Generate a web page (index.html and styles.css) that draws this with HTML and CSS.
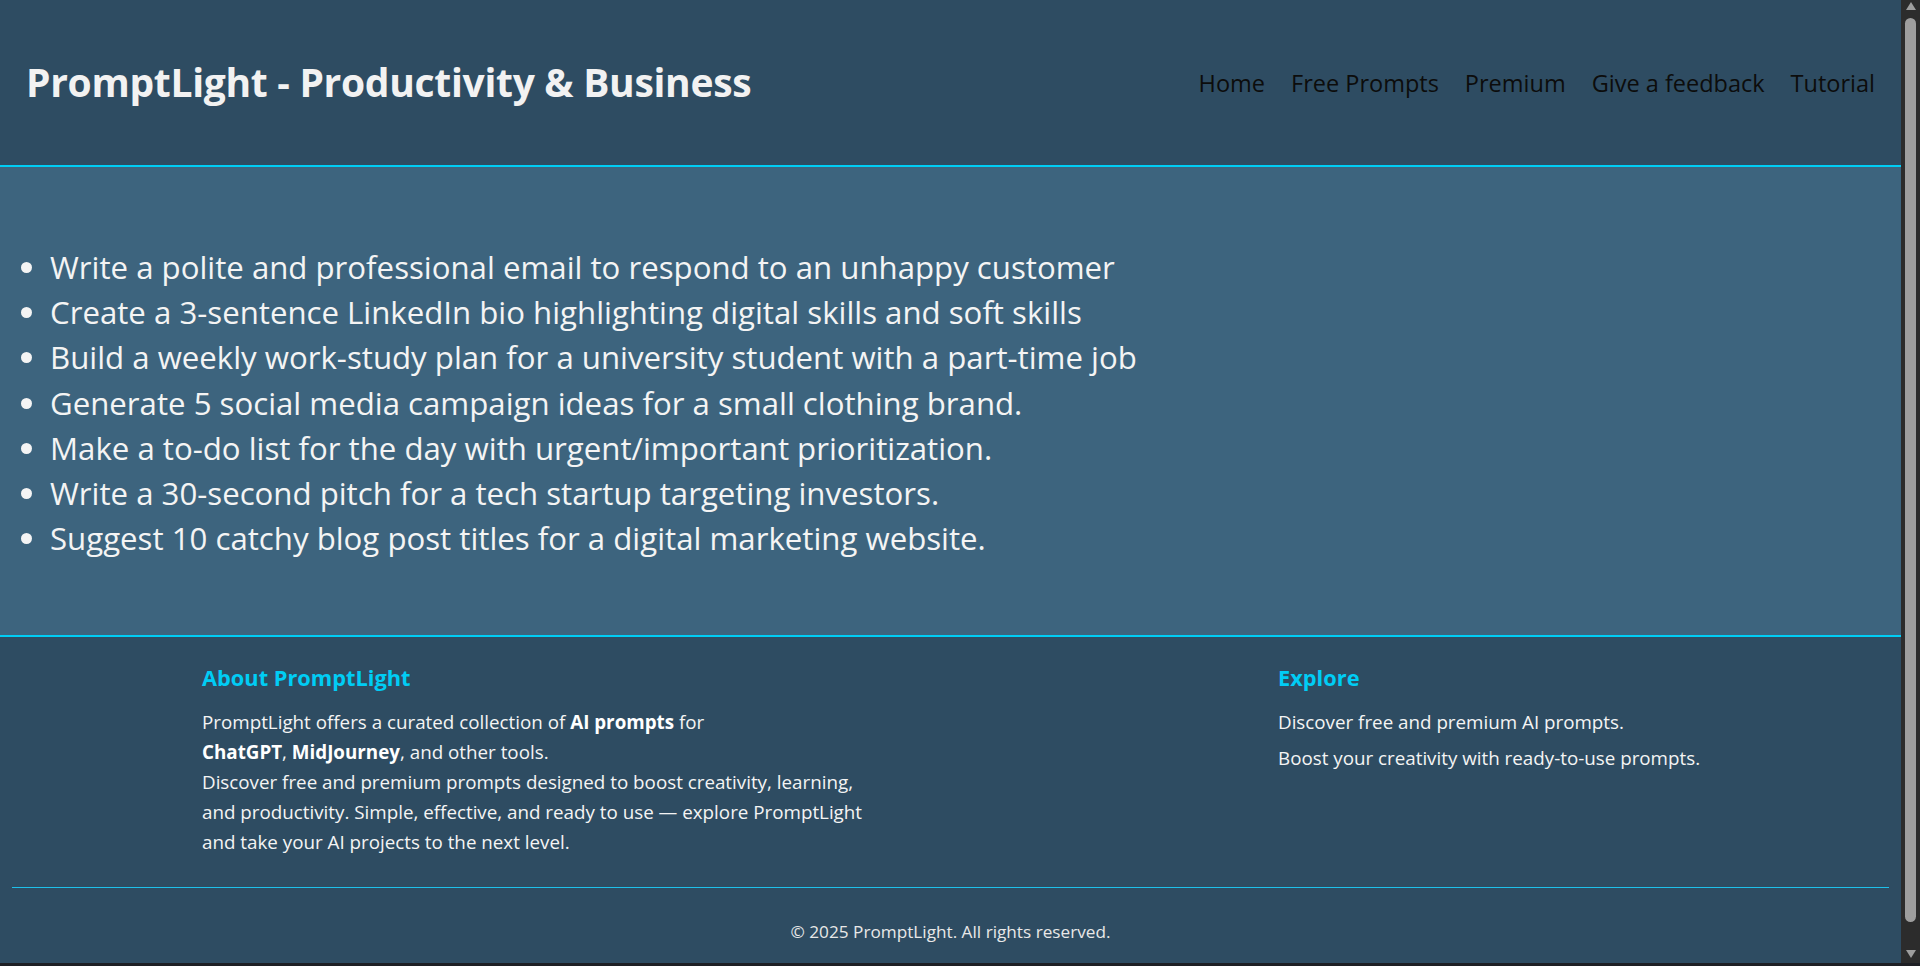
FILE: index.html
```html
<!DOCTYPE html>
<html lang="en">
<head>
<meta charset="utf-8">
<title>PromptLight - Productivity &amp; Business</title>
<link rel="stylesheet" href="styles.css">
</head>
<body>
<div class="window">
  <div class="page">
    <header class="site-header">
      <h1 class="brand">PromptLight - Productivity &amp; Business</h1>
      <nav class="nav">
        <a href="#" class="nav-link">Home</a>
        <a href="#" class="nav-link">Free Prompts</a>
        <a href="#" class="nav-link">Premium</a>
        <a href="#" class="nav-link">Give a feedback</a>
        <a href="#" class="nav-link">Tutorial</a>
      </nav>
    </header>
    <main class="prompts">
      <ul class="prompt-list">
        <li>Write a polite and professional email to respond to an unhappy customer</li>
        <li>Create a 3-sentence LinkedIn bio highlighting digital skills and soft skills</li>
        <li>Build a weekly work-study plan for a university student with a part-time job</li>
        <li>Generate 5 social media campaign ideas for a small clothing brand.</li>
        <li>Make a to-do list for the day with urgent/important prioritization.</li>
        <li>Write a 30-second pitch for a tech startup targeting investors.</li>
        <li>Suggest 10 catchy blog post titles for a digital marketing website.</li>
      </ul>
    </main>
    <footer class="site-footer">
      <div class="footer-cols">
        <section class="footer-col">
          <h3 class="footer-title">About PromptLight</h3>
          <p class="footer-text">PromptLight offers a curated collection of <strong>AI prompts</strong> for<br><strong>ChatGPT</strong>, <strong>MidJourney</strong>, and other tools.<br>Discover free and premium prompts designed to boost creativity, learning,<br>and productivity. Simple, effective, and ready to use — explore PromptLight<br>and take your AI projects to the next level.</p>
        </section>
        <section class="footer-col">
          <h3 class="footer-title">Explore</h3>
          <p class="footer-text explore-line">Discover free and premium AI prompts.</p>
          <p class="footer-text explore-line">Boost your creativity with ready-to-use prompts.</p>
        </section>
      </div>
      <div class="footer-bottom">
        <p class="copyright">© 2025 PromptLight. All rights reserved.</p>
      </div>
    </footer>
  </div>
  <div class="scrollbar">
    <span class="sb-arrow sb-up"></span>
    <span class="sb-track"><span class="sb-thumb"></span></span>
    <span class="sb-arrow sb-down"></span>
  </div>
</div>
</body>
</html>
```

FILE: styles.css
```css
* { box-sizing: border-box; }

html, body {
  margin: 0;
  padding: 0;
  height: 966px;
  overflow: hidden;
  background: #1e1f24;
}

body {
  font-family: "Open Sans", "Noto Sans", Arial, sans-serif;
  color: #f2f2f2;
}

.window {
  display: flex;
  height: 966px;
}

.page {
  flex: 1;
  display: flex;
  flex-direction: column;
  min-width: 0;
}

/* Header */
.site-header {
  height: 167px;
  background: #2e4c62;
  border-bottom: 2px solid #00cdf5;
  display: flex;
  align-items: center;
  justify-content: space-between;
  padding: 0 26px;
}

.brand {
  margin: 0 0 2px;
  font-size: 39px;
  line-height: 48px;
  font-weight: 700;
  color: #f2f2f2;
  letter-spacing: -0.3px;
}

.nav {
  display: flex;
  gap: 26px;
}

.nav-link {
  color: #0c0c0c;
  text-decoration: none;
  font-size: 23.5px;
  line-height: 30px;
}

/* Main */
.prompts {
  background: #3d647e;
  border-bottom: 2px solid #00cdf5;
  padding: 78px 0 74px;
}

.prompt-list {
  margin: 0;
  padding-left: 50px;
  font-size: 31.2px;
  line-height: 45.2px;
  color: #f4f4f4;
}

/* Footer */
.site-footer {
  background: #2e4c62;
  padding: 27px 0 18px;
}

.footer-cols {
  display: grid;
  grid-template-columns: 672px 421px;
  justify-content: space-around;
}

.footer-title {
  margin: 0 0 15px;
  font-size: 21.8px;
  line-height: 28px;
  font-weight: 700;
  color: #00cdf5;
}

.footer-text {
  margin: 0;
  font-size: 18.8px;
  line-height: 30px;
  white-space: nowrap;
  color: #f4f4f4;
}

.footer-text strong { font-weight: 700; color: #ffffff; }

.explore-line + .explore-line { margin-top: 6px; }

.footer-bottom {
  margin: 30px 12px 0;
  border-top: 1px solid #1ec0ea;
  padding-top: 31px;
}

.copyright {
  margin: 0;
  text-align: center;
  font-size: 17.2px;
  line-height: 26px;
  color: #e8e8e8;
}

/* Scrollbar imitation */
.scrollbar {
  width: 19px;
  height: 963px;
  background: #2c2c2c;
  display: flex;
  flex-direction: column;
  align-items: center;
  padding: 2px 0 5px;
}

.sb-arrow {
  width: 0;
  height: 0;
  border-left: 5px solid transparent;
  border-right: 5px solid transparent;
}

.sb-up { border-bottom: 8px solid #9e9e9e; }
.sb-down { border-top: 8px solid #9e9e9e; }

.sb-track {
  flex: 1;
  display: flex;
  padding: 8px 0 28px;
}

.sb-thumb {
  width: 11px;
  background: #9e9e9e;
  border-radius: 6px;
}
```
